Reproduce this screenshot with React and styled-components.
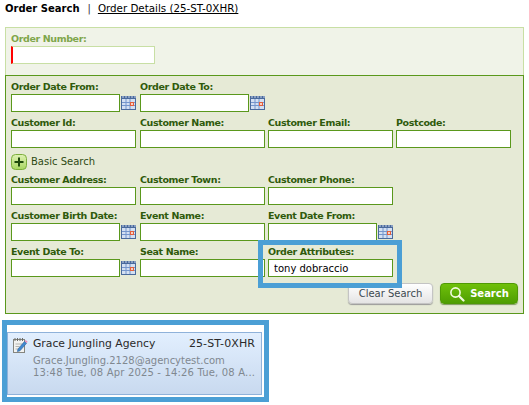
import React from "react";
import styled, { createGlobalStyle } from "styled-components";

const GlobalStyle = createGlobalStyle`
  html, body {
    margin: 0;
    padding: 0;
    background: #fff;
    font-family: "DejaVu Sans", Verdana, sans-serif;
    font-size: 10px;
  }
  * {
    box-sizing: border-box;
  }
`;

const Page = styled.div`
  position: relative;
  width: 529px;
  height: 405px;
  overflow: hidden;
  padding: 0 5px;
`;

const Tabs = styled.div`
  display: flex;
  align-items: center;
  height: 16px;
  margin-bottom: 11px;
  color: #000;
`;

const ActiveTab = styled.span`
  font-size: 10px;
  font-weight: bold;
`;

const Divider = styled.span`
  margin: 0 7px 0 8px;
  font-size: 10px;
  color: #333;
`;

const TabLink = styled.a`
  font-size: 10.3px;
  color: #000;
  text-decoration: underline;
`;

const TopPanel = styled.div`
  width: 519px;
  height: 48px;
  padding: 6px 5px 0;
  border: 1px solid #c8dfa4;
  border-bottom: 0;
  background: #f0f3e8;
`;

const Label = styled.label`
  display: block;
  height: 12px;
  line-height: 10px;
  font-size: 9.5px;
  font-weight: bold;
  letter-spacing: -0.38px;
  white-space: nowrap;
  color: ${(p) => (p.$muted ? "#7fa64a" : "#2f5a0c")};
`;

const OrderInput = styled.input`
  display: block;
  width: 144px;
  height: 18px;
  padding: 0 4px;
  border: 1px solid #c8dfa4;
  border-left: 2px solid #f00;
  border-radius: 0;
  background: #fff;
  outline: none;
`;

const SearchPanel = styled.div`
  width: 519px;
  height: 239px;
  padding: 6px 5px 0;
  border: 1px solid #5a981c;
  background: #e6ead6;
`;

const Row = styled.div`
  display: grid;
  grid-template-columns: 129px 128px 128px 128px;
  margin-bottom: 6px;
`;

const Field = styled.div`
  min-width: 0;
`;

const InputLine = styled.div`
  display: flex;
  align-items: center;
  gap: 1px;
`;

const TextInput = styled.input`
  display: block;
  width: ${(p) => p.$w || 125}px;
  height: 18px;
  padding: 0 5px;
  border: 1px solid #5a981c;
  border-radius: 0;
  background: #fff;
  outline: none;
  font-family: "DejaVu Sans", Verdana, sans-serif;
  font-size: 10px;
  color: #000;
`;

const ToggleRow = styled.div`
  display: flex;
  align-items: center;
  gap: 4px;
  height: 17px;
  margin: -1px 0 5px;
  font-size: 10px;
  color: #2f4a14;
`;

const Actions = styled.div`
  display: flex;
  justify-content: flex-end;
  gap: 7px;
  margin: 2px 0 0;
`;

const ClearButton = styled.button`
  width: 85px;
  height: 21px;
  padding: 0;
  border: 1px solid #c4c4c4;
  border-radius: 4px;
  background: linear-gradient(#ffffff, #e4e4e4);
  box-shadow: 0 1px 1px #9a9a9a;
  font-family: "DejaVu Sans", Verdana, sans-serif;
  font-size: 10px;
  color: #3c4a50;
`;

const SearchButton = styled.button`
  display: flex;
  align-items: center;
  justify-content: center;
  gap: 5px;
  width: 78px;
  height: 21px;
  padding: 0;
  border: 1px solid #4f9a05;
  border-radius: 4px;
  background: linear-gradient(#6fc00a, #4f9e02);
  box-shadow: 0 1px 1px #7d9a5c;
  font-family: "DejaVu Sans", Verdana, sans-serif;
  font-size: 10px;
  font-weight: bold;
  color: #fff;
`;

const ResultCard = styled.div`
  width: 255px;
  height: 63px;
  margin: 18px 0 0 2px;
  padding: 3px 6px 0 5px;
  display: grid;
  grid-template-columns: 20px 1fr;
  border: 1px solid #8fb2da;
  background: linear-gradient(#e2effe, #c8d9ef);
`;

const IconSlot = styled.div`
  padding-top: 2px;
`;

const CardBody = styled.div`
  min-width: 0;
`;

const CardTitle = styled.div`
  display: flex;
  justify-content: space-between;
  height: 16px;
  line-height: 16px;
  margin-bottom: 3px;
  font-size: 10.8px;
  color: #2a2a2a;
`;

const OrderCode = styled.span`
  font-size: 11px;
  letter-spacing: 0.1px;
`;

const CardLine = styled.div`
  height: 12px;
  line-height: 12px;
  font-size: 10px;
  letter-spacing: ${(p) => p.$spacing || 0}px;
  color: #808890;
  white-space: nowrap;
`;

// blue annotation frames drawn over the form
const Highlight = styled.div`
  position: absolute;
  left: ${(p) => p.$x}px;
  top: ${(p) => p.$y}px;
  width: ${(p) => p.$w}px;
  height: ${(p) => p.$h}px;
  border: 5px solid #4b9fd5;
  pointer-events: none;
`;

const CalendarIcon = () => (
  <svg width="15" height="14" viewBox="0 0 15 14">
    <rect width="15" height="14" fill="#4a6a9c" />
    <path d="M2 0v2M5 0v2M8 0v2M11 0v2M14 0v2" stroke="#c8d4e8" />
    <rect x="1" y="3" width="13" height="10" fill="#d4e0f2" />
    <path d="M5 3v10M9 3v10M1 6.5h13M1 9.5h13" stroke="#7596cc" />
    <rect x="9" y="6" width="4" height="4" fill="#e2603c" />
    <rect x="10" y="7" width="2" height="2" fill="#fbd0c0" />
  </svg>
);

const PlusIcon = () => (
  <svg width="16" height="16" viewBox="0 0 16 16">
    <defs>
      <linearGradient id="plusFill" x1="0" y1="0" x2="0" y2="1">
        <stop offset="0" stopColor="#dff2b4" />
        <stop offset="1" stopColor="#a8d660" />
      </linearGradient>
    </defs>
    <rect x="0.5" y="0.5" width="15" height="15" rx="4" fill="url(#plusFill)" stroke="#7cae3c" />
    <path d="M8 3.5v9M3.5 8h9" stroke="#1f4a0c" strokeWidth="2" />
  </svg>
);

const SearchIcon = () => (
  <svg width="16" height="16" viewBox="0 0 16 16" fill="none">
    <circle cx="6.5" cy="6.5" r="4.6" stroke="#f2fbe0" strokeWidth="1.6" />
    <path d="M10 10l4.5 4.5" stroke="#f2fbe0" strokeWidth="2.2" strokeLinecap="round" />
  </svg>
);

const NoteIcon = () => (
  <svg width="15" height="15" viewBox="0 0 15 15">
    <rect x="0.5" y="1.5" width="11" height="13" fill="#f2f2f0" stroke="#85857f" />
    <path d="M2 0v3M4.5 0v3M7 0v3M9.5 0v3" stroke="#6c6c68" />
    <path d="M2.5 6h7M2.5 8.5h4M2.5 11h3" stroke="#b4b4b0" />
    <path d="M5 11l6.5-7.5 2 1.8L7 12.8l-2.6.8z" fill="#3f88d0" stroke="#2c5f98" strokeWidth="0.6" />
    <path d="M11.7 3.2l1-1.2 2 1.8-1 1.2z" fill="#e88cb4" />
  </svg>
);

const fieldRows = [
  [
    { label: "Order Date From:", w: 109, calendar: true },
    { label: "Order Date To:", w: 109, calendar: true },
  ],
  [
    { label: "Customer Id:" },
    { label: "Customer Name:" },
    { label: "Customer Email:" },
    { label: "Postcode:", w: 115 },
  ],
  "toggle",
  [
    { label: "Customer Address:" },
    { label: "Customer Town:" },
    { label: "Customer Phone:" },
  ],
  [
    { label: "Customer Birth Date:", w: 109, calendar: true },
    { label: "Event Name:" },
    { label: "Event Date From:", w: 109, calendar: true },
  ],
  [
    { label: "Event Date To:", w: 109, calendar: true },
    { label: "Seat Name:" },
    { label: "Order Attributes:", value: "tony dobraccio" },
  ],
];

const App = () => {
  return (
    <Page>
      <GlobalStyle />
      <Tabs>
        <ActiveTab>Order Search</ActiveTab>
        <Divider>|</Divider>
        <TabLink href="#details">Order Details (25-ST-0XHR)</TabLink>
      </Tabs>

      <TopPanel>
        <Label $muted>Order Number:</Label>
        <OrderInput readOnly />
      </TopPanel>

      <SearchPanel>
        {fieldRows.map((row, i) =>
          row === "toggle" ? (
            <ToggleRow key={i}>
              <PlusIcon />
              Basic Search
            </ToggleRow>
          ) : (
            <Row key={i}>
              {row.map((field) => (
                <Field key={field.label}>
                  <Label>{field.label}</Label>
                  <InputLine>
                    <TextInput $w={field.w} defaultValue={field.value} />
                    {field.calendar && <CalendarIcon />}
                  </InputLine>
                </Field>
              ))}
            </Row>
          )
        )}
        <Actions>
          <ClearButton>Clear Search</ClearButton>
          <SearchButton>
            <SearchIcon />
            Search
          </SearchButton>
        </Actions>
      </SearchPanel>

      <ResultCard>
        <IconSlot>
          <NoteIcon />
        </IconSlot>
        <CardBody>
          <CardTitle>
            <span>Grace Jungling Agency</span>
            <OrderCode>25-ST-0XHR</OrderCode>
          </CardTitle>
          <CardLine>Grace.Jungling.2128@agencytest.com</CardLine>
          <CardLine $spacing={0.17}>13:48 Tue, 08 Apr 2025 - 14:26 Tue, 08 A...</CardLine>
        </CardBody>
      </ResultCard>

      <Highlight $x={258} $y={240} $w={144} $h={48} />
      <Highlight $x={2} $y={320} $w={267} $h={82} />
    </Page>
  );
};

export default App;
